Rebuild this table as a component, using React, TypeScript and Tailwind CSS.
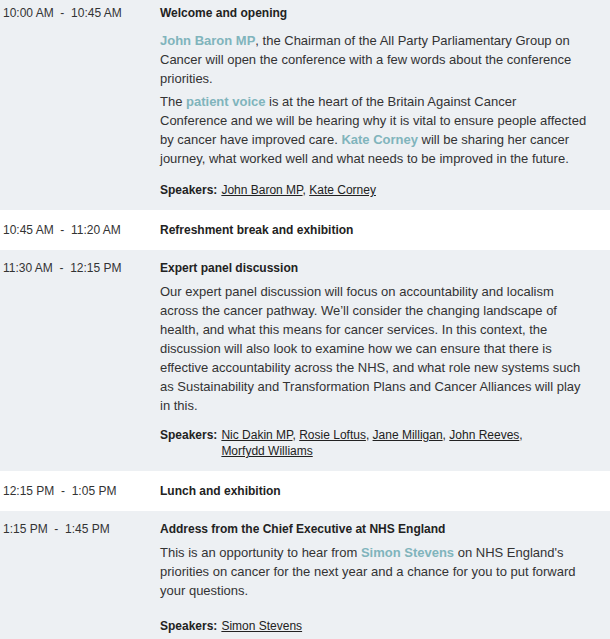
const Hl = ({ children }: { children: React.ReactNode }) => (
    <span className="font-bold text-[#80b4bc]">{children}</span>
);

const Speakers = ({ names }: { names: string[] }) => (
    <div className="flex text-[12px] leading-[16px] text-[#222]">
        <span className="font-bold mr-[4px] shrink-0">Speakers:</span>
        <div className="max-w-[320px]">
            {names.map((n, i) => (
                <span key={n}>
                    <a href="#" className="underline">{n}</a>
                    {i < names.length - 1 ? ", " : ""}
                </span>
            ))}
        </div>
    </div>
);

const Time = ({ children }: { children: string }) => (
    <div className="w-[160px] shrink-0 pl-[3px] text-[12px] leading-[16px] text-[#333] whitespace-pre">
        {children}
    </div>
);

const Title = ({ children }: { children: React.ReactNode }) => (
    <h3 className="text-[12px] leading-[16px] font-bold text-[#222]">{children}</h3>
);

export default function App() {
    return (
        <div className="w-[610px] h-[639px] overflow-hidden bg-white text-[#333] font-['Liberation_Sans',Arial,sans-serif]">
            {/* welcome */}
            <div className="flex bg-[#edf0f3] pt-[5px] pb-[12px]">
                <Time>{"10:00 AM  -  10:45 AM"}</Time>
                <div className="w-[427px]">
                    <Title>Welcome and opening</Title>
                    <p className="mt-[10px] text-[13px] leading-[19px]">
                        <Hl>John Baron MP</Hl>, the Chairman of the All Party Parliamentary Group on Cancer will open
                        the conference with a few words about the conference priorities.
                    </p>
                    <p className="mt-[4px] text-[13px] leading-[19px]">
                        The <Hl>patient voice</Hl> is at the heart of the Britain Against Cancer Conference and we will
                        be hearing why it is vital to ensure people affected by cancer have improved care.{" "}
                        <Hl>Kate Corney</Hl> will be sharing her cancer journey, what worked well and what needs to be
                        improved in the future.
                    </p>
                    <div className="mt-[14px]">
                        <Speakers names={["John Baron MP", "Kate Corney"]} />
                    </div>
                </div>
            </div>

            <div className="flex bg-white py-[12px]">
                <Time>{"10:45 AM  -  11:20 AM"}</Time>
                <Title>Refreshment break and exhibition</Title>
            </div>

            {/* panel */}
            <div className="flex bg-[#edf0f3] pt-[10px] pb-[12px]">
                <Time>{"11:30 AM  -  12:15 PM"}</Time>
                <div className="w-[427px]">
                    <Title>Expert panel discussion</Title>
                    <p className="mt-[6px] text-[13px] leading-[19px]">
                        Our expert panel discussion will focus on accountability and localism across the cancer
                        pathway. We’ll consider the changing landscape of health, and what this means for cancer
                        services. In this context, the discussion will also look to examine how we can ensure that
                        there is effective accountability across the NHS, and what role new systems such as
                        Sustainability and Transformation Plans and Cancer Alliances will play in this.
                    </p>
                    <div className="mt-[12px]">
                        <Speakers names={["Nic Dakin MP", "Rosie Loftus", "Jane Milligan", "John Reeves", "Morfydd Williams"]} />
                    </div>
                </div>
            </div>

            <div className="flex bg-white py-[12px]">
                <Time>{"12:15 PM  -  1:05 PM"}</Time>
                <Title>Lunch and exhibition</Title>
            </div>

            {/* nhs */}
            <div className="flex bg-[#edf0f3] pt-[10px] pb-[12px]">
                <Time>{"1:15 PM  -  1:45 PM"}</Time>
                <div className="w-[427px]">
                    <Title>Address from the Chief Executive at NHS England</Title>
                    <p className="mt-[6px] text-[13px] leading-[19px]">
                        This is an opportunity to hear from <Hl>Simon Stevens</Hl> on NHS England's priorities on
                        cancer for the next year and a chance for you to put forward your questions.
                    </p>
                    <div className="mt-[18px]">
                        <Speakers names={["Simon Stevens"]} />
                    </div>
                </div>
            </div>
        </div>
    );
}
